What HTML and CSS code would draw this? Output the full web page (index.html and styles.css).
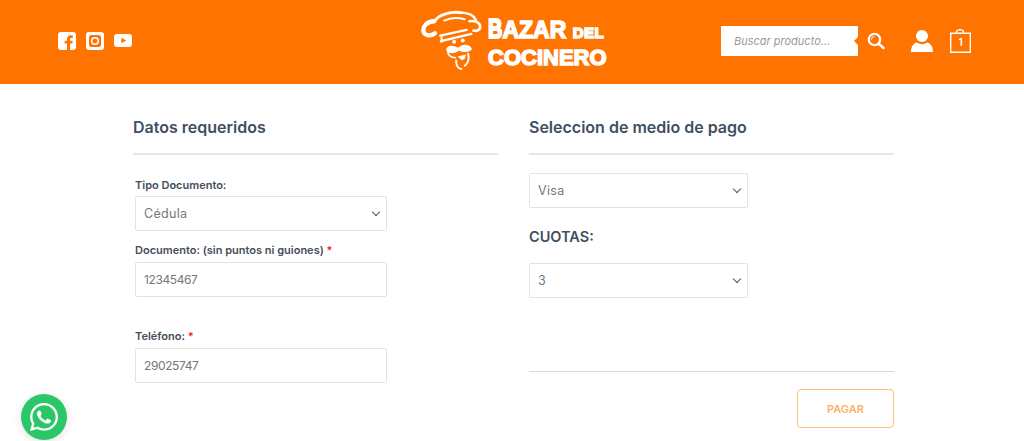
FILE: index.html
```html
<!DOCTYPE html>
<html lang="es">
<head>
    <meta charset="UTF-8">
    <meta name="viewport" content="width=device-width, initial-scale=1.0">
    <title>Bazar del Cocinero</title>
    <link rel="stylesheet" href="styles.css">
</head>
<body>
    <header class="site-header">
        <div class="social">
            <svg class="icon-fb" viewBox="0 0 18 18" width="18" height="18"><path fill="#fff" fill-rule="evenodd" d="M3 0h12a3 3 0 0 1 3 3v12a3 3 0 0 1-3 3h-3v-6.500h2.300l.4-2.800H12V7.300c0-.9.4-1.400 1.500-1.400h1.300V3.400C14.300 3.300 13.500 3.200 12.700 3.200 10.500 3.200 9 4.600 9 7v1.700H6.700v2.800H9V18H3a3 3 0 0 1-3-3V3a3 3 0 0 1 3-3z"/></svg>
            <svg class="icon-ig" viewBox="0 0 18 18" width="18" height="18"><path fill="#fff" fill-rule="evenodd" d="M3 0h12a3 3 0 0 1 3 3v12a3 3 0 0 1-3 3H3a3 3 0 0 1-3-3V3a3 3 0 0 1 3-3zm2.500 3A2.500 2.500 0 0 0 3 5.500v7A2.500 2.500 0 0 0 5.500 15h7a2.500 2.500 0 0 0 2.500-2.500v-7A2.500 2.500 0 0 0 12.500 3zM9 5a4 4 0 1 1 0 8 4 4 0 0 1 0-8zm0 1.500a2.500 2.500 0 1 0 0 5 2.500 2.500 0 0 0 0-5z"/></svg>
            <svg class="icon-yt" viewBox="0 0 18 13" width="18" height="13"><path fill="#fff" fill-rule="evenodd" d="M3 0h12a3 3 0 0 1 3 3v7a3 3 0 0 1-3 3H3a3 3 0 0 1-3-3V3a3 3 0 0 1 3-3zm4.300 3.700v5.600l5-2.800z"/></svg>
        </div>

        <a class="logo" href="#">
            <svg class="logo-chef" viewBox="30 25 190 190" width="63" height="63">
                <g fill="none" stroke="#fff" stroke-linecap="round" stroke-linejoin="round">
                    <path stroke-width="9" d="M72 60C85 42 120 32 150 36"/>
                    <path stroke-width="13" d="M70 62C48 62 34 78 38 94C42 106 58 108 72 98"/>
                    <path stroke-width="7" d="M150 36C175 36 190 46 196 58"/>
                    <path stroke-width="8" d="M176 62C200 58 214 72 206 86C200 92 194 92 188 90"/>
                    <path stroke-width="6" d="M100 60C120 50 140 50 162 56"/>
                    <path stroke-width="7" d="M88 105L168 88"/>
                    <path stroke-width="7" d="M90 122L182 100"/>
                    <path stroke-width="6" d="M92 108L92 124"/>
                    <path stroke-width="5" d="M112 150C108 165 122 172 134 172"/>
                    <path stroke-width="6" d="M172 160C178 176 170 190 162 196"/>
                    <path stroke-width="6" d="M136 180C136 195 140 204 152 206"/>
                </g>
                <g fill="#fff">
                    <path d="M106 150C106 136 122 130 142 142C156 128 178 130 184 146C176 158 156 156 144 150C134 160 114 162 106 150z"/>
                    <circle cx="130" cy="124" r="6"/>
                    <circle cx="156" cy="120" r="6"/>
                    <path d="M140 168l26 -6 -4 12 -8 6z"/>
                </g>
            </svg>
            <div class="logo-text">
                <div class="logo-line"><span class="logo-big">B</span>AZAR <span class="logo-small">DEL</span></div>
                <div class="logo-line">COCINERO</div>
            </div>
        </a>

        <div class="header-tools">
            <div class="search">
                <input type="text" placeholder="Buscar producto...">
            </div>
            <svg class="icon-search" viewBox="0 0 18 18" width="18" height="18"><circle cx="7.500" cy="7.500" r="5.700" fill="none" stroke="#fff" stroke-width="2.200"/><path d="M4.500 7.500a3 3 0 0 1 3-3" fill="none" stroke="#fff" stroke-width="1"/><path d="M12 12l4.500 4" stroke="#fff" stroke-width="2.600" stroke-linecap="round"/></svg>
            <svg class="icon-user" viewBox="0 0 22 22" width="22" height="22"><circle cx="11" cy="6" r="6" fill="#fff"/><path fill="#fff" d="M0 22c0-6 3-9 6-9.500 3 2 7 2 10 0 3 .5 6 3.500 6 9.500z"/></svg>
            <div class="cart">
                <svg viewBox="0 0 21 24" width="21" height="24"><path fill="none" stroke="#fff" stroke-width="1.400" d="M.7 4.200h19.600v19.100H.7zM6.500 4.200V2.700a3.500 2 0 0 1 7 0v1.500"/></svg>
                <span class="cart-count">1</span>
            </div>
        </div>
    </header>

    <main class="checkout">
        <section class="col-data">
            <h2 class="col-title">Datos requeridos</h2>
            <div class="fields">
                <label class="field-label label-type">Tipo Documento:</label>
                <div class="select-wrap">
                    <select class="field-input"><option>Cédula</option></select>
                </div>
                <label class="field-label label-doc">Documento: (sin puntos ni guiones) <span class="req">*</span></label>
                <input class="field-input" type="text" value="12345467">
                <label class="field-label label-tel">Teléfono: <span class="req">*</span></label>
                <input class="field-input" type="text" value="29025747">
            </div>
        </section>

        <section class="col-pay">
            <h2 class="col-title">Seleccion de medio de pago</h2>
            <div class="select-wrap pay-select">
                <select class="field-input"><option>Visa</option></select>
            </div>
            <h3 class="cuotas-title">CUOTAS:</h3>
            <div class="select-wrap">
                <select class="field-input"><option>3</option></select>
            </div>
            <div class="pay-footer">
                <button class="btn-pay">PAGAR</button>
            </div>
        </section>
    </main>

    <a class="whatsapp" href="#">
        <svg viewBox="0 0 448 512" width="28" height="32"><path fill="#fff" d="M380.9 97.1C339 55.1 283.2 32 223.9 32c-122.4 0-222 99.6-222 222 0 39.1 10.200 77.300 29.600 111L0 480l117.700-30.900c32.400 17.700 68.900 27 106.100 27h.1c122.300 0 224.100-99.600 224.100-222 0-59.300-25.200-115-67.100-157zm-157 341.600c-33.200 0-65.700-8.900-94-25.700l-6.700-4-69.800 18.300L72 359.200l-4.400-7c-18.500-29.400-28.200-63.300-28.200-98.200 0-101.700 82.800-184.500 184.600-184.500 49.300 0 95.600 19.200 130.400 54.100 34.800 34.900 56.200 81.200 56.100 130.500 0 101.800-84.900 184.600-186.600 184.600zm101.200-138.200c-5.500-2.800-32.800-16.200-37.900-18-5.100-1.900-8.800-2.800-12.500 2.800-3.700 5.600-14.300 18-17.600 21.800-3.200 3.700-6.500 4.200-12 1.400-32.600-16.300-54-29.100-75.500-66-5.700-9.800 5.700-9.100 16.300-30.300 1.800-3.700.9-6.900-.5-9.700-1.400-2.800-12.500-30.100-17.100-41.200-4.500-10.800-9.100-9.300-12.500-9.500-3.200-.2-6.900-.2-10.600-.2-3.700 0-9.700 1.400-14.800 6.900-5.100 5.600-19.400 19-19.400 46.300 0 27.300 19.900 53.700 22.600 57.400 2.800 3.700 39.100 59.700 94.800 83.800 35.200 15.200 49 16.500 66.600 13.900 10.700-1.600 32.800-13.400 37.400-26.400 4.600-13 4.600-24.100 3.200-26.400-1.300-2.500-5-3.900-10.500-6.600z"/></svg>
    </a>
</body>
</html>
```
FILE: styles.css
```css
* {
    box-sizing: border-box;
}
body {
    margin: 0;
    font-family: Inter, "Open Sans", sans-serif;
    color: #3f4f5f;
    background-color: #fff;
    overflow: hidden;
}

/* header */
.site-header {
    height: 84px;
    padding: 0 53px 3px 58px;
    display: grid;
    grid-template-columns: 1fr auto 1fr;
    align-items: center;
    background-color: #ff7300;
}
.social {
    display: flex;
    align-items: center;
    gap: 10px;
}
.logo {
    width: 187px;
    display: flex;
    align-items: center;
    gap: 4px;
    color: #fff;
    text-decoration: none;
}
.logo-chef {
    flex: none;
}
.logo-text {
    padding-top: 7px;
    font-family: "Liberation Sans", sans-serif;
    font-weight: 700;
    font-size: 22px;
    line-height: 25px;
    -webkit-text-stroke: 1.500px #fff;
    white-space: nowrap;
}
.logo-line:first-child {
    font-size: 23px;
}
.logo-big {
    display: inline-block;
    transform: scaleY(1.35);
    transform-origin: 50% 80%;
    font-size: 20px;
}
.logo-small {
    font-size: 15px;
    letter-spacing: 0.5px;
}
.header-tools {
    display: flex;
    align-items: center;
    justify-content: flex-end;
}
.search {
    position: relative;
    width: 137px;
    height: 30px;
    margin-right: 9px;
}
.search::after {
    content: "";
    position: absolute;
    right: 0;
    top: 11px;
    border: 4px solid transparent;
    border-right-color: #ff7300;
}
.search input {
    width: 100%;
    height: 100%;
    padding: 0 0 0 13px;
    border: 0;
    border-radius: 1px;
    font-family: inherit;
    font-size: 11px;
    font-style: italic;
    background-color: #fff;
}
.search input::placeholder {
    color: #9a9a9a;
    opacity: 1;
}
.icon-search {
    margin-right: 26px;
}
.icon-user {
    margin-right: 17px;
}
.cart {
    position: relative;
    width: 21px;
    height: 24px;
    display: flex;
}
.cart-count {
    position: absolute;
    left: 0;
    right: 0;
    top: 6px;
    color: #fff;
    font-size: 10px;
    font-weight: 600;
    line-height: 14px;
    text-align: center;
}

/* checkout columns */
.checkout {
    display: grid;
    grid-template-columns: 365px 365px;
    gap: 31px;
    padding: 33px 130px 0 133px;
}
.col-title {
    margin: 0;
    padding-bottom: 15px;
    border-bottom: 2px solid #e6e6e6;
    font-size: 16px;
    font-weight: 600;
    line-height: 21px;
    color: #3f4f5f;
}
.fields {
    width: 252px;
    margin: 23px 0 0 2px;
}
.field-label {
    display: block;
    margin-bottom: 5px;
    font-size: 11px;
    font-weight: 600;
    line-height: 14px;
    color: #444f5a;
}
.label-type {
    margin-bottom: 4px;
}
.label-doc {
    margin-top: 12px;
}
.label-tel {
    margin-top: 32px;
}
.req {
    color: #f01f1f;
}
.field-input {
    display: block;
    width: 100%;
    height: 35px;
    padding: 0 8px;
    border: 1px solid #e3e3e3;
    border-radius: 2px;
    font-family: inherit;
    font-size: 12px;
    letter-spacing: -0.4px;
    color: #777;
    background-color: #fff;
    appearance: none;
}
select.field-input {
    font-size: 12.500px;
    letter-spacing: 0.3px;
}
.select-wrap {
    position: relative;
}
.select-wrap::after {
    content: "";
    position: absolute;
    right: 8px;
    top: 13px;
    width: 5px;
    height: 5px;
    border-right: 1.500px solid #555;
    border-bottom: 1.500px solid #555;
    transform: rotate(45deg);
    pointer-events: none;
}
.col-pay .select-wrap {
    width: 219px;
}
.pay-select {
    margin-top: 18px;
}
.cuotas-title {
    margin: 21px 0 18px;
    font-size: 14.500px;
    font-weight: 600;
    line-height: 16px;
    color: #3f4f5f;
}
.pay-footer {
    margin-top: 73px;
    padding-top: 17px;
    border-top: 1px solid #d9d9d9;
    display: flex;
    justify-content: flex-end;
}
.btn-pay {
    width: 97px;
    height: 39px;
    border: 1.500px solid #ffbe78;
    border-radius: 4px;
    font-family: inherit;
    font-size: 11px;
    font-weight: 600;
    color: #ffb066;
    background-color: #fff;
}

/* floating button */
.whatsapp {
    position: fixed;
    left: 21px;
    top: 394px;
    width: 46px;
    height: 46px;
    display: flex;
    align-items: center;
    justify-content: center;
    border-radius: 50%;
    background-color: #2ac768;
    box-shadow: 0 2px 10px rgba(0, 0, 0, 0.12);
}
```
